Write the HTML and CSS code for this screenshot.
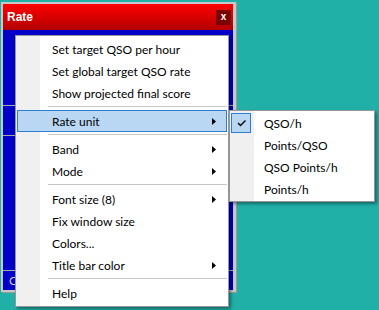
FILE: index.html
```html
<!DOCTYPE html>
<html lang="en">
<head>
  <meta charset="UTF-8" />
  <meta name="viewport" content="width=device-width, initial-scale=1.0" />
  <title>Rate</title>
  <link rel="stylesheet" href="styles.css">
</head>
<body>
  <div class="window">
    <div class="titlebar">
      <span class="title">Rate</span>
      <span class="close">x</span>
    </div>
    <div class="rate-body">
      <div class="row row-top"></div>
      <div class="row row-mid"></div>
      <div class="row row-main"></div>
      <div class="row row-status">Current</div>
    </div>
  </div>

  <div class="menu">
    <div class="item">Set target QSO per hour</div>
    <div class="item">Set global target QSO rate</div>
    <div class="item">Show projected final score</div>
    <div class="sep"></div>
    <div class="item active">Rate unit <svg class="arrow" width="4" height="7" viewBox="0 0 4 7"><polygon points="0,0 4,3.5 0,7" fill="#000"/></svg></div>
    <div class="sep"></div>
    <div class="item">Band <svg class="arrow" width="4" height="7" viewBox="0 0 4 7"><polygon points="0,0 4,3.5 0,7" fill="#000"/></svg></div>
    <div class="item">Mode <svg class="arrow" width="4" height="7" viewBox="0 0 4 7"><polygon points="0,0 4,3.5 0,7" fill="#000"/></svg></div>
    <div class="sep"></div>
    <div class="item">Font size (8) <svg class="arrow" width="4" height="7" viewBox="0 0 4 7"><polygon points="0,0 4,3.5 0,7" fill="#000"/></svg></div>
    <div class="item">Fix window size</div>
    <div class="item">Colors...</div>
    <div class="item">Title bar color <svg class="arrow" width="4" height="7" viewBox="0 0 4 7"><polygon points="0,0 4,3.5 0,7" fill="#000"/></svg></div>
    <div class="sep"></div>
    <div class="item">Help</div>
  </div>

  <div class="menu submenu">
    <div class="sub-item">
      <span class="tick checked">
        <svg width="18" height="18" viewBox="0 0 18 18"><path d="M6 9 L8.5 11.5 L13.5 6.5" fill="none" stroke="#000" stroke-width="1.4"/></svg>
      </span>
      QSO/h
    </div>
    <div class="sub-item"><span class="tick"></span>Points/QSO</div>
    <div class="sub-item"><span class="tick"></span>QSO Points/h</div>
    <div class="sub-item"><span class="tick"></span>Points/h</div>
  </div>
</body>
</html>
```

FILE: styles.css
```css
body {
  margin: 0;
  width: 379px;
  height: 310px;
  overflow: hidden;
  background-color: #21b0a8;
  font-family: Lato, 'Noto Sans', sans-serif;
  font-size: 12px;
  color: #000;
}

.window {
  width: 230px;
  height: 286px;
  margin: 2px 0 0 1px;
  border: 2px solid #c8c8c8;
  border-right-width: 3px;
  box-shadow: 1px 1px 0 #9a9a9a;
  display: flex;
  flex-direction: column;
}

.titlebar {
  height: 26px;
  background: linear-gradient(#ff0000, #b30000);
  display: flex;
  align-items: center;
  justify-content: space-between;
  padding: 0 2px 0 4px;
}

.title {
  font-family: 'Liberation Sans', sans-serif;
  font-weight: 700;
  font-size: 12px;
  color: #fff;
}

.close {
  width: 15px;
  height: 15px;
  margin-top: 1px;
  background-color: #7a0000;
  color: #fff;
  font-family: 'Liberation Sans', sans-serif;
  font-weight: 700;
  font-size: 10px;
  line-height: 14px;
  text-align: center;
}

.rate-body {
  flex-grow: 1;
  background-color: #0000c8;
  display: flex;
  flex-direction: column;
}

.row {
  border-bottom: 1px solid #a8a8a8;
}

.row-top {
  height: 75px;
}

.row-mid {
  height: 29px;
}

.row-main {
  height: 134px;
}

.row-status {
  flex-grow: 1;
  border-bottom: none;
  padding-left: 6px;
  color: #c8c8e8;
  font-size: 12px;
  line-height: 19px;
}

/* popup menus */
.menu {
  position: absolute;
  left: 15px;
  top: 35px;
  width: 210px;
  padding: 2px 1px;
  border: 1px solid #979797;
  background: linear-gradient(to right, #f0f0f0 24px, #fff 24px);
  box-shadow: 2px 2px 3px rgba(0, 0, 0, 0.4);
}

.item {
  height: 22px;
  box-sizing: border-box;
  padding: 0 10px 0 34px;
  border: 1px solid transparent;
  display: flex;
  align-items: center;
  justify-content: space-between;
  white-space: nowrap;
}

.item.active {
  background-color: #b9d7f3;
  border-color: #2a7fd4;
}

.sep {
  height: 1px;
  margin: 2px 0 3px 31px;
  background-color: #c6c6c6;
}

.submenu {
  left: 229px;
  top: 110px;
  width: 142px;
  padding: 1px;
}

.sub-item {
  height: 22px;
  display: flex;
  align-items: center;
  white-space: nowrap;
}

.tick {
  width: 20px;
  height: 20px;
  box-sizing: border-box;
  margin-right: 13px;
  border: 1px solid transparent;
}

.tick.checked {
  background-color: #b9d7f3;
  border-color: #2a7fd4;
}

.tick svg {
  display: block;
}
```
